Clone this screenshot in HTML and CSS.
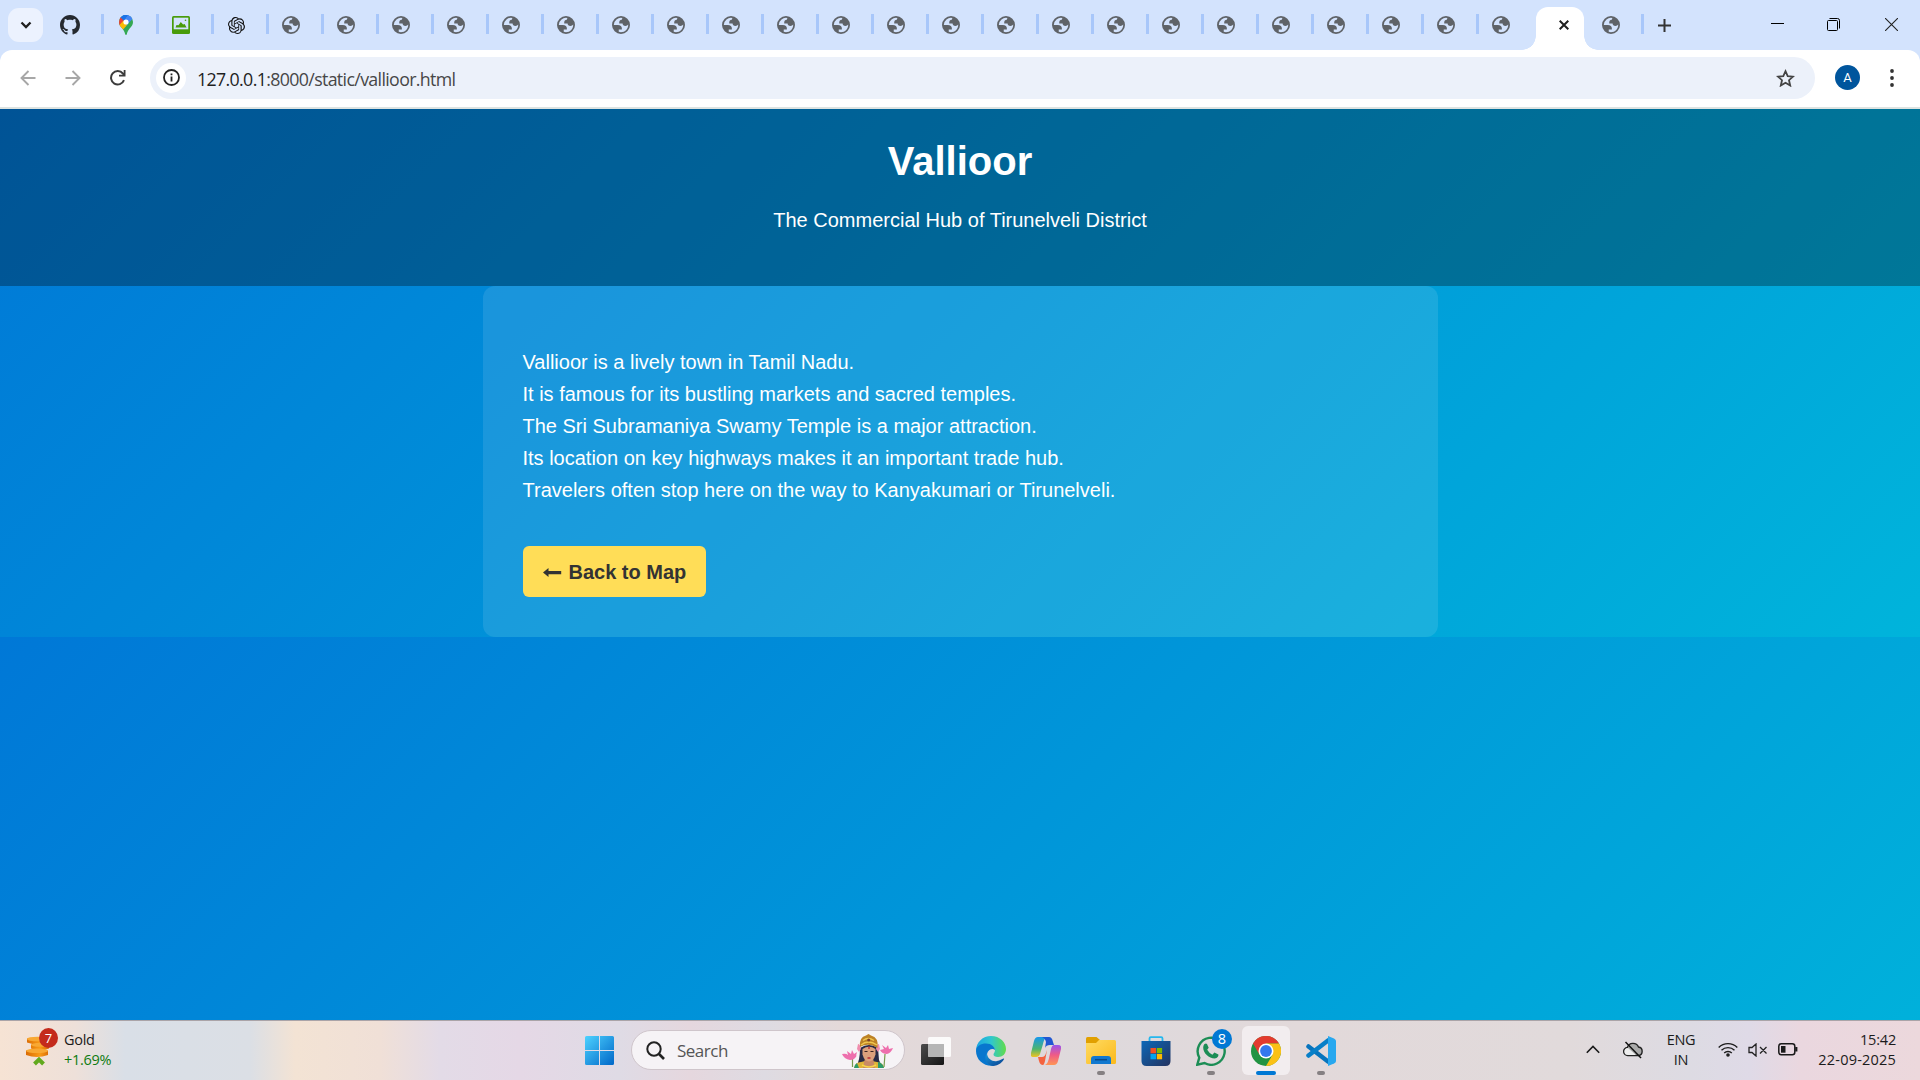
FILE: index.html
```html
<!DOCTYPE html>
<html lang="en">
<head>
<meta charset="utf-8">
<title>Vallioor</title>
<link rel="stylesheet" href="styles.css">
</head>
<body>
<svg width="0" height="0" class="defs" aria-hidden="true">
  <defs>
    <symbol id="globe" viewBox="2 2 20 20">
      <path fill="#5f6368" fill-rule="evenodd" d="M12 2a10 10 0 1 0 0 20 10 10 0 0 0 0-20zM4 12h4.400c3.407.022 4.922 1.730 4.543 5.127H9.488v2.470a8.004 8.004 0 0 0 10.498-8.083C19.327 12.504 18.332 13 17 13c-2.137 0-3.206-.916-3.206-2.750h-3.748c-.274-2.728.683-4.092 2.870-4.092 0-.975.327-1.597.811-1.970A8.004 8.004 0 0 0 4 12z"/>
    </symbol>
    <linearGradient id="win" x1="0" y1="0" x2="1" y2="1"><stop stop-color="#4dd2ff"/><stop offset="1" stop-color="#0067c8"/></linearGradient>
    <linearGradient id="edgeTop"><stop stop-color="#1aa4e2"/><stop offset=".5" stop-color="#2fc6cf"/><stop offset="1" stop-color="#62dc4a"/></linearGradient>
    <linearGradient id="edgeLow" x1="0" y1="0" x2="1" y2="1"><stop stop-color="#1597e0"/><stop offset="1" stop-color="#0b3f8c"/></linearGradient>
    <linearGradient id="copL" x1="0" y1="0" x2="0" y2="1"><stop stop-color="#1597ee"/><stop offset=".6" stop-color="#4db56d"/><stop offset="1" stop-color="#f2c420"/></linearGradient>
    <linearGradient id="copR" x1="0" y1="0" x2="0" y2="1"><stop stop-color="#9a55ed"/><stop offset=".5" stop-color="#ef5b86"/><stop offset="1" stop-color="#ff9655"/></linearGradient>
    <linearGradient id="folder" x1="0" y1="0" x2="1" y2="1"><stop stop-color="#ffdb62"/><stop offset="1" stop-color="#fbb91b"/></linearGradient>
    <linearGradient id="store" x1="0" y1="0" x2="1" y2="1"><stop stop-color="#0c68b8"/><stop offset="1" stop-color="#24335f"/></linearGradient>
    <linearGradient id="dark" x1="0" y1="0" x2="1" y2="1"><stop stop-color="#4b4b4b"/><stop offset="1" stop-color="#151515"/></linearGradient>
    <linearGradient id="coin"><stop stop-color="#d96a05"/><stop offset=".6" stop-color="#f99b17"/><stop offset="1" stop-color="#d96a05"/></linearGradient>
  </defs>
</svg>
<div class="screen">
  <div class="tabstrip">
    <div class="tab-search"><svg width="12" height="8" viewBox="0 0 12 8"><path d="M1.500 1.500L6 6l4.500-4.500" fill="none" stroke="#1f1f1f" stroke-width="2.300"/></svg></div>
    <div class="tabs" id="tabs">
      <div class="tab"><svg width="20" height="20" viewBox="0 0 16 16"><path fill="#24292f" d="M8 0C3.580 0 0 3.580 0 8c0 3.540 2.290 6.530 5.470 7.590.4.070.55-.17.55-.38 0-.19-.01-.82-.01-1.490-2.010.37-2.530-.49-2.690-.94-.09-.23-.48-.94-.82-1.130-.28-.15-.68-.52-.01-.53.63-.01 1.080.58 1.230.82.72 1.210 1.870.87 2.330.66.07-.52.28-.87.51-1.070-1.780-.2-3.640-.89-3.640-3.950 0-.87.31-1.590.82-2.150-.08-.2-.36-1.020.08-2.120 0 0 .67-.21 2.200.82.64-.18 1.320-.27 2-.27s1.360.09 2 .27c1.530-1.040 2.200-.82 2.200-.82.44 1.100.16 1.920.08 2.120.51.56.82 1.270.82 2.150 0 3.070-1.870 3.750-3.650 3.950.29.25.54.73.54 1.480 0 1.070-.01 1.930-.01 2.200 0 .21.15.46.55.38A8.010 8.010 0 0 0 16 8c0-4.420-3.580-8-8-8z"/></svg></div>
      <div class="tab"><svg width="20" height="20" viewBox="0 0 20 20"><clipPath id="pin"><path d="M10 0a7 7 0 0 1 7 7c0 5-5 6-6.200 12.300-.2.900-1.400.9-1.600 0C8 13 3 12 3 7a7 7 0 0 1 7-7z"/></clipPath><g clip-path="url(#pin)"><path fill="#34a853" d="M0 0h20v20H0z"/><path fill="#4285f4" d="M6 0h14L9 12z"/><path fill="#1a73e8" d="M4 0h6l-1 6-6-4z"/><path fill="#ea4335" d="M0 0l5 2 4 4-5 6H0z"/><path fill="#fbbc04" d="M2 11.500L8 5l3 5-6 7z"/></g><path fill="#1a73e8" d="M4.700 2.500A7 7 0 0 1 12 .3L8 6z"/><path fill="#4285f4" d="M12 .3a7 7 0 0 1 4.200 3.400L11.500 9 8 6z"/><circle cx="10" cy="7" r="2.600" fill="#fff"/></svg></div>
      <div class="tab"><svg width="18" height="18" viewBox="0 0 18 18"><rect width="18" height="18" rx="1.500" fill="#489c0b"/><path fill="#d3e3fd" d="M1.700 1.700h14.600v11.600H1.700z"/><path fill="#489c0b" d="M3.500 11.500l1-2.500 2 .3L8.800 6l2.300 2.500 1.500-.5 2 3.500z"/><circle cx="13.500" cy="4.200" r=".8" fill="#489c0b"/></svg></div>
      <div class="tab"><svg width="17" height="17" viewBox="0 0 24 24"><path fill="#111" d="M22.282 9.821a5.985 5.985 0 0 0-.516-4.910 6.046 6.046 0 0 0-6.510-2.900A6.065 6.065 0 0 0 4.981 4.182a5.985 5.985 0 0 0-3.998 2.900 6.046 6.046 0 0 0 .743 7.097 5.980 5.980 0 0 0 .511 4.911 6.051 6.051 0 0 0 6.515 2.900A5.985 5.985 0 0 0 13.260 24a6.056 6.056 0 0 0 5.772-4.206 5.990 5.990 0 0 0 3.998-2.900 6.056 6.056 0 0 0-.748-7.073zM13.260 22.430a4.476 4.476 0 0 1-2.876-1.041l.141-.081 4.779-2.758a.795.795 0 0 0 .393-.681v-6.737l2.020 1.169a.071.071 0 0 1 .038.052v5.583a4.504 4.504 0 0 1-4.495 4.494zM3.600 18.304a4.471 4.471 0 0 1-.535-3.014l.142.085 4.783 2.759a.771.771 0 0 0 .780 0l5.843-3.369v2.332a.080.080 0 0 1-.033.062L9.740 19.950a4.499 4.499 0 0 1-6.140-1.646zM2.341 7.896a4.485 4.485 0 0 1 2.366-1.973V11.600a.766.766 0 0 0 .388.677l5.815 3.354-2.020 1.169a.076.076 0 0 1-.071 0l-4.830-2.787A4.504 4.504 0 0 1 2.341 7.872zm16.596 3.856l-5.833-3.388L15.119 7.200a.076.076 0 0 1 .071 0l4.830 2.791a4.494 4.494 0 0 1-.676 8.105v-5.678a.790.790 0 0 0-.407-.667zm2.011-3.023l-.142-.085-4.774-2.782a.776.776 0 0 0-.785 0L9.409 9.230V6.897a.066.066 0 0 1 .028-.061l4.830-2.787a4.499 4.499 0 0 1 6.680 4.660zm-12.640 4.135l-2.020-1.164a.080.080 0 0 1-.038-.057V6.075a4.499 4.499 0 0 1 7.376-3.454l-.142.081-4.778 2.758a.795.795 0 0 0-.393.682zm1.097-2.365l2.602-1.500 2.607 1.500v2.999l-2.597 1.500-2.607-1.500z"/></svg></div>
    </div>
    <div class="new-tab"><svg width="13" height="13" viewBox="0 0 13 13"><path d="M6.500 0v13M0 6.500h13" stroke="#333" stroke-width="2"/></svg></div>
    <div class="window-controls">
      <svg width="13" height="13" viewBox="0 0 13 13"><path d="M0 5.500h13" stroke="#000"/></svg>
      <svg width="13" height="13" viewBox="0 0 13 13" fill="none" stroke="#000"><rect x=".5" y="2.500" width="10" height="10" rx="1"/><path d="M2.500.5h8a2 2 0 0 1 2 2v8"/></svg>
      <svg width="13" height="13" viewBox="0 0 13 13"><path d="M0 0l13 13M13 0L0 13" stroke="#222" stroke-width="1.100"/></svg>
    </div>
  </div>
  <div class="toolbar">
    <svg class="nav" width="16" height="16" viewBox="0 0 16 16" fill="none" stroke="#a7a7a7" stroke-width="1.900"><path d="M15.500 8H2M8.500 1L1.500 8l7 7"/></svg>
    <svg class="nav" width="16" height="16" viewBox="0 0 16 16" fill="none" stroke="#a7a7a7" stroke-width="1.900"><path d="M.5 8H14M7.500 1l7 7-7 7"/></svg>
    <svg class="nav reload" width="16" height="16" viewBox="0 0 16 16"><path d="M14 10.200A6.700 6.700 0 1 1 12.900 3.500l1.300 1.500" fill="none" stroke="#3c3c3c" stroke-width="2"/><path fill="#3c3c3c" d="M15.500 0v6.500H9V4.700h4.700V0z"/></svg>
    <div class="address">
      <div class="info"><svg width="17" height="17" viewBox="0 0 17 17"><circle cx="8.500" cy="8.500" r="7.500" fill="none" stroke="#222" stroke-width="1.800"/><path d="M8.500 7.500v5M8.500 4.500v1.800" stroke="#222" stroke-width="1.800"/></svg></div>
      <div class="url"><span class="host">127.0.0.1</span>:8000/static/vallioor.html</div>
      <svg class="star" width="19" height="18" viewBox="0 0 19 18"><path d="M9.500 2.200l2.200 4.900 5.300.5-4 3.600 1.200 5.300-4.700-2.800-4.700 2.800L6 11.200 2 7.600l5.300-.5z" fill="none" stroke="#444" stroke-width="1.800"/></svg>
    </div>
    <div class="avatar">A</div>
    <svg class="menu" width="4" height="18" viewBox="0 0 4 18" fill="#333"><circle cx="2" cy="2" r="1.900"/><circle cx="2" cy="9" r="1.900"/><circle cx="2" cy="16" r="1.900"/></svg>
  </div>
  <div class="viewport">
    <div class="page">
      <header><h1>Vallioor</h1><p>The Commercial Hub of Tirunelveli District</p></header>
      <main class="content">
        <p>Vallioor is a lively town in Tamil Nadu.<br>It is famous for its bustling markets and sacred temples.<br>The Sri Subramaniya Swamy Temple is a major attraction.<br>Its location on key highways makes it an important trade hub.<br>Travelers often stop here on the way to Kanyakumari or Tirunelveli.</p>
        <a class="back"><svg width="19" height="9" viewBox="0 0 19 9"><path fill="#333" d="M0 4.500L5.500 0v2.900h12.700v3.300H5.500V9z"/></svg><span>Back to Map</span></a>
      </main>
    </div>
    <div class="page-repeat"></div>
  </div>
  <div class="taskbar">
    <div class="widget">
      <div class="coins">
        <svg width="32" height="40" viewBox="0 0 32 40"><g fill="url(#coin)"><path d="M1 10.500h21v4q-10 4-21 0zM5 16.500h18v4q-9 4-18 0zM0 22.500h22v4.500q-11 4-22 0z"/></g><g fill="#f8a833"><ellipse cx="11.500" cy="11" rx="10.500" ry="2.300"/><ellipse cx="14" cy="16.800" rx="9" ry="2"/><ellipse cx="11" cy="22.800" rx="11" ry="2.300"/></g><path d="M8.500 36l4.500-4.500 4.500 4.500" fill="none" stroke="#62a91d" stroke-width="4"/></svg>
        <span class="count">7</span>
      </div>
      <div class="quote"><span>Gold</span><span class="gain">+1.69%</span></div>
    </div>
    <div class="apps">
      <div class="app start"><svg width="29" height="29" viewBox="0 0 29 29"><path fill="url(#win)" d="M1.500 0H14v14H0V1.500Q0 0 1.500 0zM15 0h12.500Q29 0 29 1.500V14H15zM0 15h14v14H1.500Q0 29 0 27.500zM15 15h14v12.500q0 1.500-1.500 1.500H15z"/></svg></div>
      <div class="search">
        <svg width="19" height="19" viewBox="0 0 19 19"><circle cx="8" cy="8" r="6.700" fill="none" stroke="#222" stroke-width="2"/><path d="M12.500 12.500L18 18" stroke="#222" stroke-width="2.600"/></svg>
        <span>Search</span>
        <svg class="deity" width="52" height="34" viewBox="0 0 52 34">
          <path d="M10.500 24v9M43 20l-1 13" stroke="#789a4c" stroke-width="1.200"/>
          <g fill="#ee6fad"><path d="M0 20q4-1 6 1l-1-4 4 3 1-4 2 4 3-2-1 4 1-1q-2 5-7 5-6-1-8-6zM38 16l4-1-2-4 4 3 2-3 1 4 4-1q-2 5-6 6-5 0-7-4z"/></g>
          <path d="M18 14q9-6 18 0l1 12 3 7q-4 1-6-4H19q-2 5-5 4 4-6 4-19z" fill="#292a45"/>
          <path d="M12 34q1-6 7-6l4-1h7l5 1q7 1 7 6z" fill="#e0b33a"/><path d="M36 28q5 1 6 6h-6zM12 34q0-3 3-5l2 5z" fill="#2f9a68"/>
          <path d="M23 24h8l2 10H21z" fill="#c98a66"/>
          <path d="M16 10q2 0 3 5l-2 3-2-3zM37 10q-2 0-3 5l2 3 2-3z" fill="#f08cae"/>
          <path d="M18 13q-1-10 6-11.500L26.500 0 29 1.500q8 2 6.500 12.500-9-6-17.500-1z" fill="#bd8226"/>
          <path d="M19 11q7-6 16 0M21 6.500q5-4 11 0" fill="none" stroke="#f0c64f" stroke-width="1.400"/><circle cx="26.700" cy="6" r="1.500" fill="#7a3f28"/>
          <path d="M20.500 15q6.500-4.500 13 0v5.500q-2 7-6.500 7t-6.500-7z" fill="#dca07c"/>
          <path d="M22.500 17.500h3M28.500 17.500h3" stroke="#3b2221" stroke-width="1.200"/><path d="M25.500 24h3M27 12.500v2.500" stroke="#b82830" stroke-width="1.300"/>
          <path d="M20 31q7 4 14 0" stroke="#f8d748" stroke-width="1.600" fill="none"/>
        </svg>
      </div>
      <div class="app"><svg width="30" height="30" viewBox="0 0 30 30"><rect y="8" width="23" height="21" rx="1.500" fill="url(#dark)"/><rect x="7" y="1" width="23" height="20" rx="1.500" fill="#fff" opacity=".85"/><path d="M7 8h16v13H8.500Q7 21 7 19.500z" fill="#aaa" opacity=".8"/></svg></div>
      <div class="app"><svg width="30" height="30" viewBox="0 0 30 30"><path fill="url(#edgeTop)" d="M0 15C0 6 7 0 15 0c9 0 15 6.500 15 13 0 5-3.500 8-8 8-3 0-4.500-1.200-4.500-2.500S19 16.500 19 14c0-3-4-5.500-8-5.500S2 11 0 15z"/><path fill="#0876ce" d="M0 15c0-5 5-7.500 10-7.500 5.500 0 9 3.500 9 6.500-2-2-7-1-8 4-1 6 4 10 8 11.500-10 2-19-5-19-14.500z"/><path fill="url(#edgeLow)" d="M11 17c0 6 6 9 10 8 3-.5 5-2 6.500-2.500.5 0 .8.300.5.800C25 28 21 30 17 30 11 29 7 23 11 17z"/></svg></div>
      <div class="app"><svg width="30" height="28" viewBox="0 0 30 28"><path fill="url(#copL)" d="M7 0h10c-3 0-4 3-5 7l-3 10q-1 3-4 3H2q-3 0-2-4L3 4q1-4 4-4z"/><path fill="#2157d2" d="M13 0h5q3 0 4 5l1 3h-4q-4 0-5 3l1-6q-1-4-4-5z"/><path fill="url(#copR)" d="M23 8h4q4 0 3 4l-3 12q-1 4-4 4H13c3 0 4-3 5-7l2-9q1-4 3-4z"/><path fill="#f4633f" d="M7 20h4q3 0 4-4l1-3-2 11q-1 4-2 4-3 0-4-4z"/></svg></div>
      <div class="app running"><svg width="30" height="27" viewBox="0 0 30 27"><path d="M0 1.500Q0 0 1.500 0h9L14 3v4H0z" fill="#e1a000"/><path d="M0 6h10l3-3h15.500Q30 3 30 4.500v21q0 1.500-1.500 1.500h-27Q0 27 0 25.500z" fill="url(#folder)"/><path d="M5 27v-5q0-3 3-3h14q3 0 3 3v5z" fill="#1178cf"/><path d="M9 22.700h12" stroke="#084b8b" stroke-width="1.500"/></svg></div>
      <div class="app"><svg width="30" height="30" viewBox="0 0 30 30"><path d="M8.500 6V2.500q0-1.300 1.300-1.300h10.400q1.300 0 1.300 1.300V6" fill="none" stroke="#26b7ed" stroke-width="1.800"/><path d="M.5 5h29v20q0 5-5 5h-19q-5 0-5-5z" fill="url(#store)"/><path fill="#f25022" d="M9.500 12H15v5.300H9.500z"/><path fill="#7fba00" d="M15.800 12h5.300v5.300h-5.300z"/><path fill="#00a4ef" d="M9.500 18H15v5.300H9.500z"/><path fill="#ffb900" d="M15.800 18h5.300v5.300h-5.300z"/></svg></div>
      <div class="app running whatsapp"><svg width="30" height="30" viewBox="0 0 30 30"><path d="M1.300 28.700l2-7A13.500 13.500 0 1 1 8.500 27z" fill="none" stroke="#1c8d55" stroke-width="2.400"/><path fill="#1c8d55" d="M8.500 8q1.500-1 2.500 0l1.700 3.800-1.500 2q2 3.500 5.200 4.900l2-2.100 4 2q.4 3.200-3.700 4C13 22.500 7 17 7.200 11.500 7.300 9.500 8 8.500 8.500 8z"/></svg><span class="unread">8</span></div>
      <div class="app running active"><svg width="30" height="30" viewBox="0 0 30 30"><circle cx="15" cy="15" r="15" fill="#229342"/><path fill="#e33b2e" d="M2 7.500A15 15 0 0 1 28 7.500H15L8.500 18.800z"/><path fill="#fbc116" d="M15 7.500h13A15 15 0 0 1 15 30l6.500-11.200z"/><circle cx="15" cy="15" r="7.500" fill="#fff"/><circle cx="15" cy="15" r="5.900" fill="#3478ed"/></svg></div>
      <div class="app running"><svg width="30" height="30" viewBox="0 0 30 30"><path d="M2.500 10.500L22 25.500" stroke="#0874bd" stroke-width="4.500" stroke-linecap="round"/><path d="M2.500 19.500L22 4.500" stroke="#087fc8" stroke-width="4.500" stroke-linecap="round"/><path fill="#28a8ef" d="M22 0l6 2.500q2 1 2 2.500v20q0 1.500-2 2.500L22 30z"/></svg></div>
    </div>
    <div class="tray">
      <svg class="chev" width="14" height="9" viewBox="0 0 14 9"><path d="M.8 7.800L7 1.500l6.200 6.300" fill="none" stroke="#1a1a1a" stroke-width="1.600"/></svg>
      <svg class="cloud" width="20" height="18" viewBox="0 0 20 18"><path d="M5 14.500a4 4 0 0 1-.7-8A6 6 0 0 1 15.500 6a4.300 4.300 0 0 1 0 8.500z" fill="#aaa" stroke="#222" stroke-width="1.400"/><path d="M5 14a3.500 3.500 0 0 1 0-7l8 7z" fill="#eee"/><path d="M2.500 1L18 17" stroke="#111" stroke-width="1.500"/></svg>
      <div class="language"><span>ENG</span><span>IN</span></div>
      <svg class="wifi" width="20" height="15" viewBox="0 0 20 15" fill="none" stroke="#1c1c1c" stroke-width="1.400"><path d="M.7 5.500a13 13 0 0 1 18.600 0M3.500 8.300a9.200 9.200 0 0 1 13 0M6.200 11a5.400 5.400 0 0 1 7.600 0"/><circle cx="10" cy="13" r="1.100" fill="#1c1c1c"/></svg>
      <svg class="volume" width="20" height="14" viewBox="0 0 20 14" fill="none" stroke="#222" stroke-width="1.300"><path d="M1 4.500h3L8 1v12L4 9.500H1zM12 4l6.500 6.500M18.500 4L12 10.500"/></svg>
      <svg class="battery" width="20" height="13" viewBox="0 0 20 13"><rect x=".8" y=".8" width="16" height="11" rx="2.500" fill="none" stroke="#1a1a1a" stroke-width="1.500"/><rect x="3" y="3" width="4.500" height="6.700" fill="#1a1a1a"/><path d="M18.300 4v4.500" stroke="#1a1a1a" stroke-width="2.200"/></svg>
      <div class="clock"><span>15:42</span><span class="date">22-09-2025</span></div>
    </div>
  </div>
</div>
<script src="tabs.js"></script>
</body>
</html>
```
FILE: tabs.js
```js
const strip = document.getElementById('tabs');
const globe = '<svg width="18" height="18"><use href="#globe"/></svg>';
const close = '<svg width="10" height="10" viewBox="0 0 10 10"><path d="M.7.700l8.600 8.600M9.300.7L.7 9.300" stroke="#1f1f1f" stroke-width="2"/></svg>';
for (let i = 0; i < 25; i++) {
  const tab = document.createElement('div');
  const selected = i === 23;
  tab.className = 'tab' + (selected ? ' selected' : i === 22 ? ' before-selected' : '');
  tab.innerHTML = selected ? close : globe;
  strip.append(tab);
}
```
FILE: styles.css
```css
* { box-sizing: border-box; }
body { margin: 0; overflow: hidden; font-family: "Open Sans", "Noto Sans", sans-serif; }
svg { display: block; flex: none; }
.defs { position: absolute; }
.screen { width: 1920px; height: 1080px; display: flex; flex-direction: column; background: #d3e3fd; }

.tabstrip { height: 50px; flex: none; display: flex; align-items: flex-start; }
.tab-search { width: 35px; height: 34px; margin: 8px 0 0 8px; border-radius: 11px; background: #ecf2fe; display: grid; place-items: center; }
.tabs { display: flex; margin-left: 6px; }
.tab { width: 55px; height: 50px; flex: none; padding-right: 11px; display: flex; align-items: center; justify-content: center; background: linear-gradient(#a8c7fa, #a8c7fa) no-repeat 52px 14px / 3px 20px; }
.tab:first-child { padding-right: 13px; }
.tab.before-selected { background: none; }
.tab.selected { position: relative; width: 48px; height: 43px; margin: 7px 0 0 2px; padding: 0 0 7px 7px; background: #fff; border-radius: 12px 12px 0 0; }
.tab.selected::before, .tab.selected::after { content: ""; position: absolute; bottom: 0; width: 14px; height: 14px; }
.tab.selected::before { left: -14px; background: radial-gradient(circle at 0 0, transparent 13.500px, #fff 14px); }
.tab.selected::after { right: -14px; background: radial-gradient(circle at 100% 0, transparent 13.500px, #fff 14px); }
.tab.selected + .tab { margin-left: 5px; }
.new-tab { margin: 19px 0 0 14px; }
.window-controls { margin: 18px 22px 0 auto; display: flex; gap: 44px; }
.window-controls svg:first-child { margin-right: -1px; }
.window-controls svg:last-child { margin-left: 1px; }

.toolbar { height: 59px; flex: none; display: flex; align-items: center; padding: 0 26px 2px 20px; background: #fff; border-bottom: 2px solid #dde3e1; border-radius: 12px 12px 0 0; }
.nav { margin-right: 29px; }
.reload { margin-right: 24px; }
.address { width: 1665px; height: 42px; display: flex; align-items: center; padding: 0 20px 0 6px; border-radius: 21px; background: #ecf1fa; }
.info { width: 30px; height: 30px; border-radius: 50%; background: #fff; display: grid; place-items: center; }
.url { margin: 2px 0 0 11px; font-size: 17.800px; letter-spacing: -.65px; color: #474747; white-space: nowrap; }
.host { color: #1f1f1f; }
.star { margin-left: auto; }
.avatar { width: 25px; height: 25px; margin-left: 20px; border-radius: 50%; background: #00559d; color: #fff; font: 13px/25px Roboto, sans-serif; text-align: center; }
.menu { margin-left: auto; }

.viewport { flex: 1; min-height: 0; overflow: hidden; color: #fff; font-family: "Liberation Sans", Arial, sans-serif; font-size: 20px; }
.page, .page-repeat { height: 528px; background: linear-gradient(135deg, #0078d7, #00b4db); }
header { height: 177px; padding: 25px; background: rgba(0, 0, 0, .3); text-align: center; }
h1 { margin: 0; font-size: 40px; line-height: 54px; }
header p { margin: 20px 0 0; line-height: 24px; }
.content { width: 955px; height: 351px; margin: 0 auto; padding: 60px 40px 40px; border-radius: 12px; background: rgba(255, 255, 255, .1); }
.content p { margin: 0 0 40px; line-height: 32px; }
.back { width: 183px; height: 51px; padding: 2px 0 0 20px; display: flex; align-items: center; gap: 7px; border-radius: 6px; background: #ffdd57; color: #333; font-weight: bold; white-space: nowrap; }

.taskbar { height: 60px; flex: none; display: grid; grid-template-columns: 584px 1fr 340px; border-top: 1px solid #aaa4a8; color: #1b1b1b; font-size: 14.500px; line-height: 20px; background: linear-gradient(90deg, #f6e3d4 0, #eee0d9 75px, #d9dfe7 125px, #dbdfe5 250px, #f3e3d4 295px, #f0e0d7 380px, #e3dbe7 440px, #e5d8e6 520px, #dfdbe5 620px, #e5d7de 690px, #dedbe2 765px, #e4d9d9 840px, #ded9dc 1100px, #e2d9da 1300px, #e1dadb 1570px, #dddbe3 1690px, #dfdae7 1750px, #ead7df 1800px, #ecd8dc 1920px); }
.widget { display: flex; padding: 9px 0 0 26px; }
.coins { position: relative; width: 32px; margin-top: -2px; }
.count { position: absolute; left: 13px; top: 0; width: 19px; height: 20px; border-radius: 50%; background: #c42b1c; color: #fff; text-align: center; font-size: 13px; }
.quote { margin-left: 6px; display: flex; flex-direction: column; letter-spacing: -.3px; }
.gain { color: #0f7b0f; letter-spacing: -.3px; }
.apps { display: flex; align-items: flex-start; padding-top: 5px; }
.app { position: relative; width: 48px; height: 49px; margin-right: 7px; display: grid; place-items: center; border-radius: 6px; }
.app.start { width: 31px; margin-right: 16px; }
.search { width: 274px; height: 40px; margin: 4px 7px 0 0; padding-left: 14px; border: 1px solid #cfc5cb; border-radius: 20px; background: #f6f3f6; display: flex; align-items: center; font-size: 17px; color: #555; }
.search span { margin: 1px 0 0 12px; letter-spacing: -.5px; }
.deity { margin: 1px 10px 0 auto; }
.running::after { content: ""; position: absolute; left: 20px; bottom: 0; width: 8px; height: 4px; border-radius: 2px; background: #858082; }
.active { background: #f2edef; }
.active::after { left: 14px; width: 20px; background: #0078d4; }
.unread { position: absolute; left: 25px; top: 3px; width: 20px; height: 20px; border-radius: 50%; background: #0078d4; color: #fff; text-align: center; }
.tray { display: flex; align-items: center; padding: 0 24px 2px 6px; }
.cloud { margin-left: 23px; }
.language { width: 46px; margin-left: 15px; display: flex; flex-direction: column; text-align: center; letter-spacing: -.3px; }
.wifi { margin-left: 14px; }
.volume { margin-left: 10px; }
.battery { margin-left: 10px; }
.clock { margin-left: auto; display: flex; flex-direction: column; text-align: right; letter-spacing: -.2px; }
.date { letter-spacing: .2px; }
```
